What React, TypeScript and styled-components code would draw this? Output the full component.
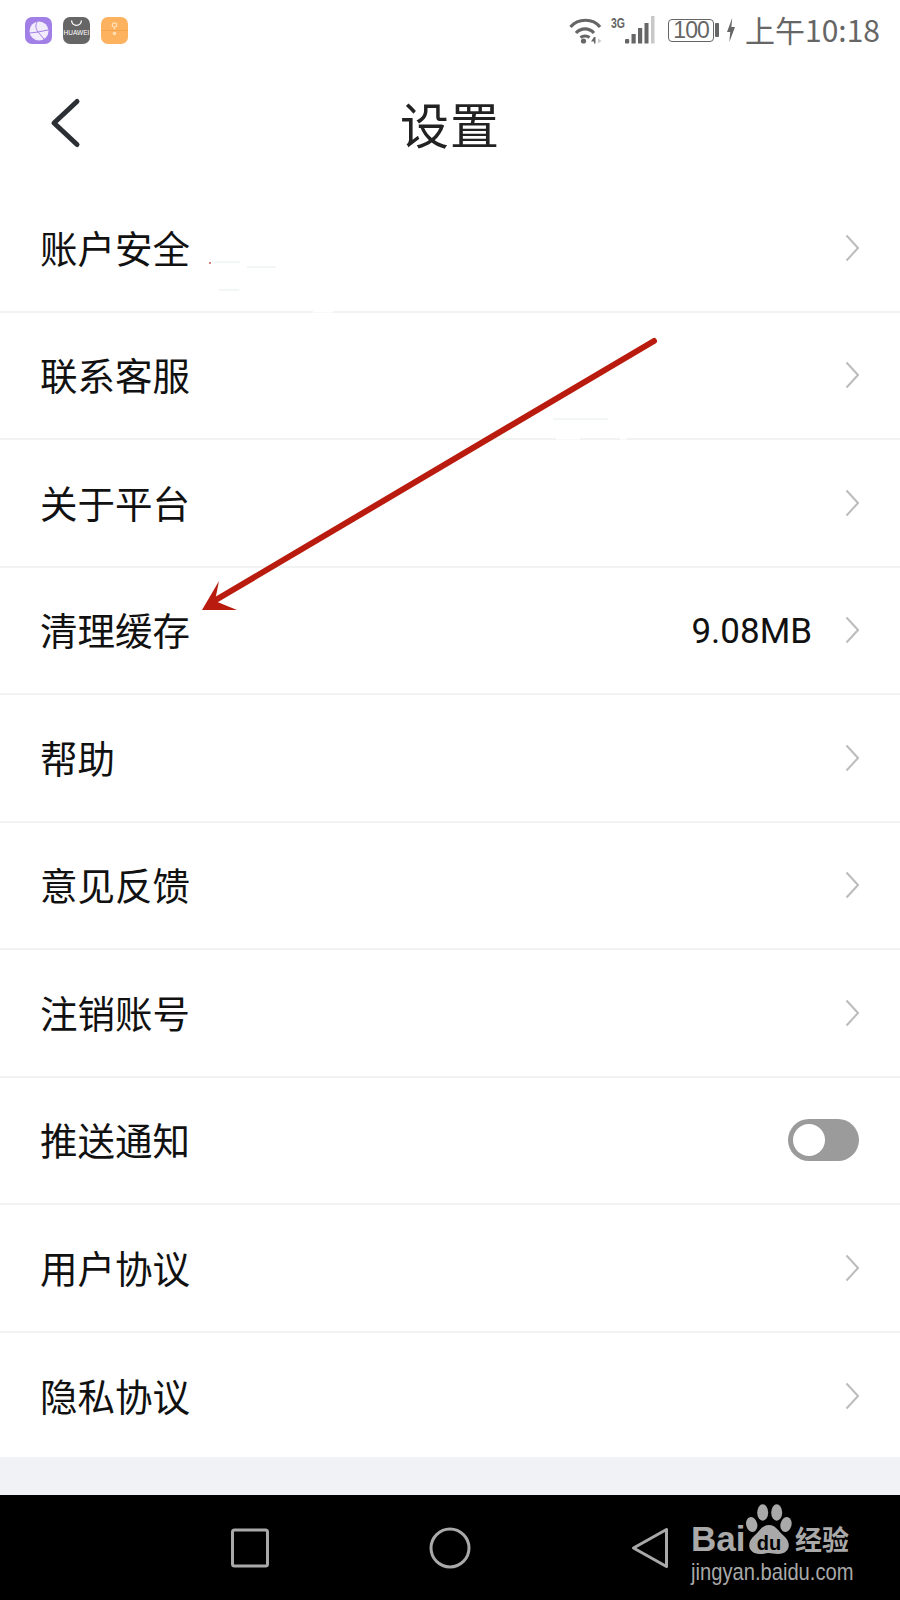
import styled, { createGlobalStyle } from 'styled-components';

const FONT = '"Noto Sans CJK SC", "Noto Sans", sans-serif';

const rows = [
  { label: '账户安全' },
  { label: '联系客服' },
  { label: '关于平台' },
  { label: '清理缓存', value: '9.08MB' },
  { label: '帮助' },
  { label: '意见反馈' },
  { label: '注销账号' },
  { label: '推送通知', toggle: true },
  { label: '用户协议' },
  { label: '隐私协议' },
];

export default function App() {
  return (
    <>
      <GlobalStyle />
      <Page>
        <StatusBar>
          <AppIcons>
            <AppIcon $bg="#a27fe6">
              <svg width="27" height="27" viewBox="0 0 27 27">
                <circle cx="14" cy="14" r="9.5" fill="#f1ebfb" />
                <path d="M12 5c-2 4-1 7 1 10l-8 1M13 15l6 7M13 15l10-2" stroke="#a27fe6" strokeWidth="1" fill="none" />
              </svg>
            </AppIcon>
            <AppIcon $bg="#666">
              <svg width="27" height="27" viewBox="0 0 27 27">
                <path d="M8.500 3.500c1 6.500 9 6.500 10 0" stroke="#fff" strokeWidth="1.300" fill="none" />
              </svg>
              <HuaweiLabel>HUAWEI</HuaweiLabel>
            </AppIcon>
            <AppIcon $bg="#fdb25f">
              <svg width="27" height="27" viewBox="0 0 27 27">
                <path d="M0 13.500h27" stroke="#f5a54e" strokeWidth="1" />
                <circle cx="13.500" cy="8" r="2.200" fill="none" stroke="#ffe0b8" strokeWidth="1.200" />
                <path d="M13.500 10.500v2" stroke="#ffe0b8" strokeWidth="1.200" />
                <circle cx="13.500" cy="16.500" r="1.800" fill="#ffe0b8" />
              </svg>
            </AppIcon>
          </AppIcons>
          <StatusRight>
            <svg width="36" height="30" viewBox="0 0 36 30" fill="none" stroke="#666">
              <path d="M1.500 12C9 3 24 3 31 12" strokeWidth="3.200" />
              <path d="M7 18C12 12.500 20 12.500 25 18" strokeWidth="3.200" />
              <path d="M11.500 22.500C14 20.500 18 20.500 20.500 22.500" strokeWidth="3" />
              <circle cx="14.500" cy="26" r="2.600" fill="#666" stroke="none" />
              <path d="M22 26.500l3-4.500h1.500v6.500h-1.500v-2z" fill="#666" stroke="none" />
              <path d="M29 23.500l3.500 2.500-3.500 2.500z" fill="#ccc" stroke="none" />
            </svg>
            <SignalBox>
              <NetworkLabel>3G</NetworkLabel>
              <svg width="30" height="28" viewBox="0 0 30 28">
                <rect x="0" y="23" width="4.200" height="4.500" rx="1" fill="#666" />
                <rect x="6.500" y="18" width="4.200" height="9.500" fill="#666" />
                <rect x="13" y="12" width="4.200" height="15.500" fill="#666" />
                <rect x="19.500" y="7" width="4" height="20.500" fill="#666" />
                <rect x="26" y="0" width="3.500" height="27.500" fill="#c8c8c8" />
              </svg>
            </SignalBox>
            <Battery>100</Battery>
            <BatteryNub />
            <svg width="8" height="24" viewBox="0 0 10 24" preserveAspectRatio="none">
              <path d="M6.500 0L0 14h4l-1 10 7-15H5.500z" fill="#666" />
            </svg>
            <Clock>上午10:18</Clock>
          </StatusRight>
        </StatusBar>

        <Header>
          <BackButton>
            <svg width="36" height="56" viewBox="0 0 36 56" fill="none">
              <path
                d="M30 6.500L7 28l23 21.500"
                stroke="#2c2f33"
                strokeWidth="5"
                strokeLinecap="round"
                strokeLinejoin="round"
              />
            </svg>
          </BackButton>
          <Title>设置</Title>
        </Header>

        <List>
          {rows.map((row) => (
            <Row key={row.label}>
              <Label>{row.label}</Label>
              {row.value && <Value>{row.value}</Value>}
              {row.toggle ? (
                <Toggle>
                  <Knob />
                </Toggle>
              ) : (
                <svg width="14" height="28" viewBox="0 0 14 28" fill="none">
                  <path d="M1.500 1.500L13 14 1.500 26.500" stroke="#bcbcbc" strokeWidth="2" />
                </svg>
              )}
            </Row>
          ))}
        </List>

        <Filler />

        <NavBar>
          <svg width="38" height="40" viewBox="0 0 38 40" fill="none">
            <rect x="1.500" y="2" width="35" height="36" rx="2" stroke="#a9a9a9" strokeWidth="3" />
          </svg>
          <svg width="42" height="42" viewBox="0 0 42 42" fill="none">
            <circle cx="21" cy="21" r="19" stroke="#a9a9a9" strokeWidth="3" />
          </svg>
          <svg width="38" height="42" viewBox="0 0 38 42" fill="none">
            <path d="M35.500 2.500v37L2.500 21z" stroke="#a9a9a9" strokeWidth="3" strokeLinejoin="round" />
          </svg>
          <Watermark>
            <BrandLine>
              <BrandBai>Bai</BrandBai>
              <PawMark>
                <svg width="46" height="50" viewBox="0 0 46 50" fill="#a9a9a9">
                  <ellipse cx="5.700" cy="20.500" rx="5.500" ry="7.500" transform="rotate(-15 5.700 20.500)" />
                  <ellipse cx="16.700" cy="8.500" rx="5.500" ry="8.300" />
                  <ellipse cx="30.700" cy="8.500" rx="5.500" ry="8.300" />
                  <ellipse cx="40" cy="20.500" rx="5.500" ry="7.500" transform="rotate(15 40 20.500)" />
                  <path d="M23 21c7 0 9 6 15 11 8 7 6 18-6 18-4 0-7-1-9-1s-5 1-9 1C2 50 0 39 8 32c6-5 8-11 15-11z" />
                </svg>
                <BrandDu>du</BrandDu>
              </PawMark>
              <BrandCn>经验</BrandCn>
            </BrandLine>
            <BrandUrl>jingyan.baidu.com</BrandUrl>
          </Watermark>
        </NavBar>

        {/* red callout arrow drawn on top of the list, plus the retouched smudges */}
        <Annotation width="900" height="1600" viewBox="0 0 900 1600" fill="none">
          <path d="M654 341L214 601" stroke="#b91c0e" strokeWidth="6" strokeLinecap="round" />
          <path d="M202 610L219 581L215 601L237 610Z" fill="#b91c0e" />
          <path d="M313 311h20M556 438h24M620 438h7" stroke="#fff" strokeWidth="3" />
          <path d="M214 262h26M247 267h29M219 290h20M553 419h55" stroke="#f0f3f3" strokeWidth="1.500" />
          <circle cx="210" cy="263" r="1" fill="#c85a50" />
        </Annotation>
      </Page>
    </>
  );
}

const GlobalStyle = createGlobalStyle`
  html, body {
    margin: 0;
    padding: 0;
    background: #fff;
  }
`;

const Page = styled.div`
  position: relative;
  width: 900px;
  height: 1600px;
  display: flex;
  flex-direction: column;
  overflow: hidden;
  background: #fff;
  font-family: ${FONT};
`;

const StatusBar = styled.div`
  height: 60px;
  padding: 0 20px 0 25px;
  display: flex;
  align-items: center;
  justify-content: space-between;
  box-sizing: border-box;
`;

const AppIcons = styled.div`
  margin-top: 1px;
  display: flex;
  gap: 11px;
`;

const AppIcon = styled.div<{ $bg: string }>`
  position: relative;
  width: 27px;
  height: 27px;
  border-radius: 7px;
  overflow: hidden;
  background: ${(p) => p.$bg};
`;

const HuaweiLabel = styled.span`
  position: absolute;
  left: -2px;
  right: -2px;
  top: 12px;
  text-align: center;
  font: 400 6.500px/8px 'Liberation Sans', sans-serif;
  color: #fff;
`;

const StatusRight = styled.div`
  display: flex;
  align-items: center;
  color: #666;
`;

const SignalBox = styled.div`
  display: flex;
  align-items: flex-end;
  margin: 0 13px 0 6px;
  height: 28px;
`;

const NetworkLabel = styled.span`
  align-self: flex-start;
  width: 14px;
  font: 700 14px/14px 'Liberation Sans', sans-serif;
  transform: scaleX(0.75);
  transform-origin: left top;
`;

const Battery = styled.div`
  width: 46px;
  height: 23px;
  border: 1.500px solid #666;
  border-radius: 4px;
  box-sizing: border-box;
  text-align: center;
  font: 400 23px/20px 'Liberation Sans', sans-serif;
  letter-spacing: -1px;
`;

const BatteryNub = styled.div`
  width: 4px;
  height: 14px;
  margin: 0 8px 0 1px;
  border-radius: 1px;
  background: #666;
`;

const Clock = styled.span`
  margin: 0 0 2px 10px;
  font-size: 30px;
  line-height: 36px;
  color: #666;
`;

const Header = styled.div`
  position: relative;
  height: 125px;
  display: flex;
  align-items: center;
  justify-content: center;
`;

const BackButton = styled.div`
  position: absolute;
  left: 47px;
  top: 35px;
  height: 56px;
`;

const Title = styled.h1`
  margin: 0;
  font-size: 49px;
  font-weight: 400;
  line-height: 60px;
  letter-spacing: 1px;
  color: #222;
`;

const List = styled.div`
  height: 1272px;
  overflow: hidden;
  display: grid;
  grid-template-rows: repeat(10, 127.500px);
`;

const Row = styled.div`
  padding: 0 41px 0 40px;
  display: flex;
  align-items: center;
  box-sizing: border-box;
  border-bottom: 2px solid #f1f3f3;

  &:last-child {
    border-bottom: 0;
  }
`;

const Label = styled.span`
  flex: 1;
  margin-bottom: 2px;
  font-size: 37.500px;
  line-height: 44px;
  color: #111;
`;

const Value = styled.span`
  margin: 4px 33px 0 0;
  font-family: Roboto, 'Noto Sans', sans-serif;
  font-size: 35px;
  line-height: 44px;
  color: #111;
`;

const Toggle = styled.div`
  width: 71px;
  height: 42px;
  padding: 5px;
  border-radius: 21px;
  box-sizing: border-box;
  background: #9b9b9b;
`;

const Knob = styled.div`
  width: 32px;
  height: 32px;
  border-radius: 50%;
  background: #fff;
`;

const Filler = styled.div`
  flex: 1;
  background: #f0f2f5;
`;

const NavBar = styled.div`
  position: relative;
  height: 105px;
  padding: 0 150px;
  display: grid;
  grid-template-columns: repeat(3, 200px);
  place-items: center;
  box-sizing: border-box;
  background: #000;
`;

const Watermark = styled.div`
  position: absolute;
  left: 691px;
  top: 9px;
  width: 165px;
  color: #a9a9a9;
`;

const BrandLine = styled.div`
  height: 50px;
  display: flex;
  align-items: flex-end;
`;

const BrandBai = styled.span`
  width: 55px;
  font: 700 35px/30px 'Liberation Sans', sans-serif;
`;

const PawMark = styled.div`
  position: relative;
  width: 46px;
  height: 50px;
`;

const BrandDu = styled.span`
  position: absolute;
  left: 0;
  right: 0;
  bottom: 2px;
  text-align: center;
  font: 700 20px/18px 'Liberation Sans', sans-serif;
  color: #000;
`;

const BrandCn = styled.span`
  margin-left: 3px;
  font-size: 27px;
  font-weight: 700;
  line-height: 30px;
  white-space: nowrap;
`;

const BrandUrl = styled.div`
  margin-top: 6px;
  font: 400 24px/24px 'Liberation Sans', sans-serif;
  white-space: nowrap;
  transform: scaleX(0.84);
  transform-origin: left center;
`;

const Annotation = styled.svg`
  position: absolute;
  left: 0;
  top: 0;
  pointer-events: none;
`;
